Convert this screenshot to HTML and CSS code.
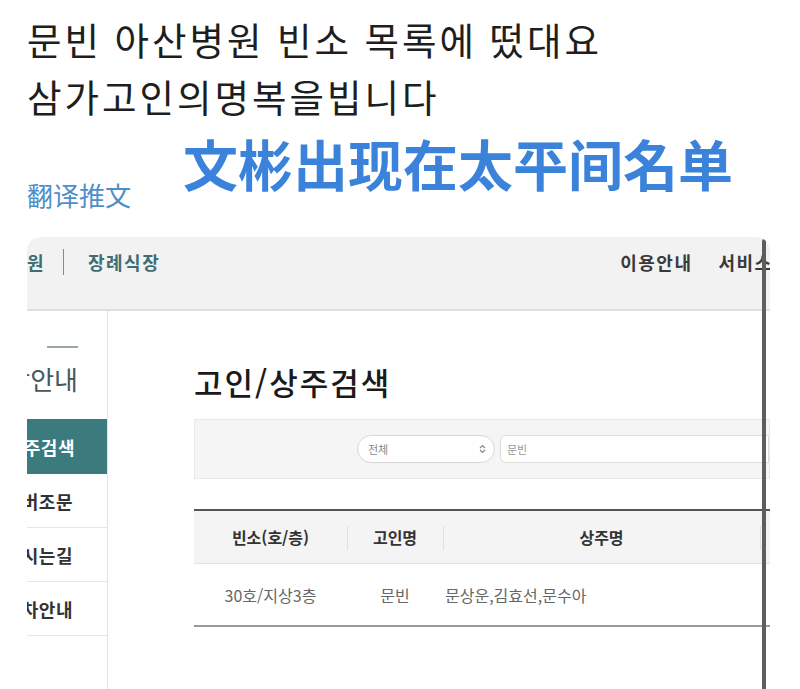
FILE: index.html
```html
<!DOCTYPE html>
<html lang="ko">
<head>
  <meta charset="UTF-8" />
  <title>문빈 빈소</title>
  <link rel="stylesheet" href="styles.css">
</head>
<body>

  <!-- tweet text -->
  <div class="tweet">
    <p class="tweet-text">문빈 아산병원 빈소 목록에 떴대요<br>삼가고인의명복을빕니다</p>
    <div class="translate">翻译推文</div>
    <div class="caption">文彬出现在太平间名单</div>
  </div>

  <!-- attached screenshot -->
  <div class="shot">
    <header class="shot-head">
      <div class="logo"><span>서울아산병원</span></div>
      <span class="head-bar"></span>
      <span class="head-title">장례식장</span>
      <nav class="head-nav">
        <span>이용안내</span>
        <span>서비스안내</span>
      </nav>
    </header>

    <div class="shot-body">
      <aside class="side">
        <div class="side-rule"></div>
        <div class="side-title"><span>장례식장안내</span></div>
        <ul class="side-menu">
          <li class="active"><span>고인/상주검색</span></li>
          <li><span>사이버조문</span></li>
          <li><span>오시는길</span></li>
          <li><span>주차안내</span></li>
        </ul>
      </aside>

      <main class="content">
        <h1>고인/상주검색</h1>
        <div class="search">
          <div class="select">
            <span>전체</span>
            <svg width="7" height="10" viewBox="0 0 7 10"><path d="M1 4 L3.5 1.5 L6 4 M1 6 L3.5 8.5 L6 6" fill="none" stroke="#888" stroke-width="1.2"/></svg>
          </div>
          <div class="field">문빈</div>
        </div>

        <table class="result">
          <thead>
            <tr>
              <th class="c1">빈소(호/층)</th>
              <th class="c2">고인명</th>
              <th class="c3">상주명</th>
              <th class="c4"></th>
            </tr>
          </thead>
          <tbody>
            <tr>
              <td class="c1">30호/지상3층</td>
              <td class="c2">문빈</td>
              <td class="c3 names">문상운,김효선,문수아</td>
              <td class="c4"></td>
            </tr>
          </tbody>
        </table>
      </main>
    </div>

    <div class="frame-edge"></div>
  </div>

</body>
</html>
```

FILE: styles.css
```css
body {
  margin: 0;
  background: #fff;
  font-family: "Noto Sans CJK KR", "Noto Sans CJK SC", sans-serif;
  color: #222;
}

/* tweet */
.tweet {
  position: relative;
  padding: 10px 0 0 27px;
}
.tweet-text {
  margin: 0;
  font-size: 37.5px;
  line-height: 57px;
  letter-spacing: 3px;
  word-spacing: -1px;
  color: #1e1e1e;
}
.translate {
  margin-top: 56px;
  font-family: "Noto Sans CJK SC", sans-serif;
  font-size: 26px;
  line-height: 30px;
  color: #4f8fc9;
}
.caption {
  position: absolute;
  left: 183px;
  top: 132px;
  font-family: "Noto Sans CJK SC", sans-serif;
  font-size: 55px;
  line-height: 60px;
  font-weight: 700;
  color: #3b83da;
  white-space: nowrap;
}

/* screenshot */
.shot {
  position: relative;
  margin: 27px 0 0 27px;
  width: 743px;
  height: 452px;
  overflow: hidden;
  border-radius: 14px 14px 0 0;
}
.shot-head {
  display: flex;
  align-items: flex-start;
  height: 58px;
  padding-top: 14px;
  background: #f2f2f2;
  border-bottom: 2px solid #dedede;
  font-size: 18px;
  line-height: 22px;
  font-weight: 700;
  letter-spacing: 1.5px;
}
.shot-head > * {
  flex-shrink: 0;
}
.logo {
  width: 18px;
  display: flex;
  justify-content: flex-end;
  overflow: hidden;
  color: #3f6d72;
}
.logo span {
  flex-shrink: 0;
  white-space: nowrap;
}
.head-bar {
  width: 1px;
  height: 26px;
  margin: -2px 0 0 18px;
  background: #8a8a8a;
}
.head-title {
  margin-left: 24px;
  color: #3f6d72;
}
.head-nav {
  display: flex;
  gap: 26px;
  margin-left: 460px;
  color: #3a3a3a;
  white-space: nowrap;
}

.shot-body {
  display: flex;
  height: 380px;
}

/* left menu */
.side {
  width: 80px;
  flex-shrink: 0;
  border-right: 1px solid #e3e3e3;
}
.side-rule {
  width: 31px;
  height: 2px;
  margin: 35px 0 0 20px;
  background: #9aa7a8;
}
.side-title {
  display: flex;
  justify-content: flex-end;
  overflow: hidden;
  margin-top: 14px;
  padding-right: 29px;
  font-size: 26px;
  line-height: 34px;
  color: #42585b;
}
.side-title span,
.side-menu span {
  flex-shrink: 0;
  white-space: nowrap;
}
.side-menu {
  list-style: none;
  margin: 23px 0 0;
  padding: 0;
}
.side-menu li {
  display: flex;
  justify-content: flex-end;
  align-items: center;
  overflow: hidden;
  height: 53px;
  padding-right: 34px;
  border-bottom: 1px solid #e6e6e6;
  font-size: 18px;
  font-weight: 700;
  letter-spacing: 0.5px;
  color: #333;
}
.side-menu li.active {
  height: 55px;
  padding-right: 32px;
  background: #3b7b7e;
  border-bottom: none;
  color: #fff;
}

/* main */
.content {
  flex: 1;
  padding: 51px 0 0 86px;
}
.content h1 {
  margin: 0;
  font-size: 31px;
  line-height: 40px;
  font-weight: 500;
  letter-spacing: 2px;
  color: #1a1a1a;
}
.search {
  display: flex;
  height: 58px;
  margin-top: 17px;
  padding-left: 162px;
  background: #f5f5f5;
  border: 1px solid #e8e8e8;
  align-items: center;
}
.select {
  display: flex;
  align-items: center;
  justify-content: space-between;
  box-sizing: border-box;
  width: 138px;
  height: 28px;
  padding: 0 8px 0 10px;
  background: #fff;
  border: 1px solid #d6d6d6;
  border-radius: 14px;
  font-size: 11px;
  color: #888;
}
.field {
  flex: 1;
  display: flex;
  align-items: center;
  box-sizing: border-box;
  height: 28px;
  margin-left: 5px;
  padding-left: 6px;
  background: #fff;
  border: 1px solid #dcdcdc;
  border-radius: 6px 0 0 6px;
  font-size: 11px;
  color: #999;
}

.result {
  width: 100%;
  margin-top: 30px;
  border-collapse: collapse;
  border-top: 2px solid #555;
  border-bottom: 2px solid #9a9a9a;
  font-size: 16px;
}
.result th {
  position: relative;
  height: 52px;
  padding: 0;
  background: #f4f4f4;
  border-bottom: 1px solid #e2e2e2;
  font-weight: 700;
  color: #333;
}
.result th + th::before {
  content: "";
  position: absolute;
  left: 0;
  top: 15px;
  height: 24px;
  width: 1px;
  background: #e0e0e0;
}
.result td {
  height: 61px;
  padding: 0;
  text-align: center;
  color: #666;
}
.result .c1 { width: 153px; }
.result .c2 { width: 96px; }
.result .c3 { width: 315px; }
.result td.names {
  text-align: left;
  padding-left: 2px;
}

.frame-edge {
  position: absolute;
  top: 2px;
  right: 4px;
  bottom: 0;
  width: 4px;
  background: #5e5e5e;
  border-radius: 2px 2px 0 0;
}
```
